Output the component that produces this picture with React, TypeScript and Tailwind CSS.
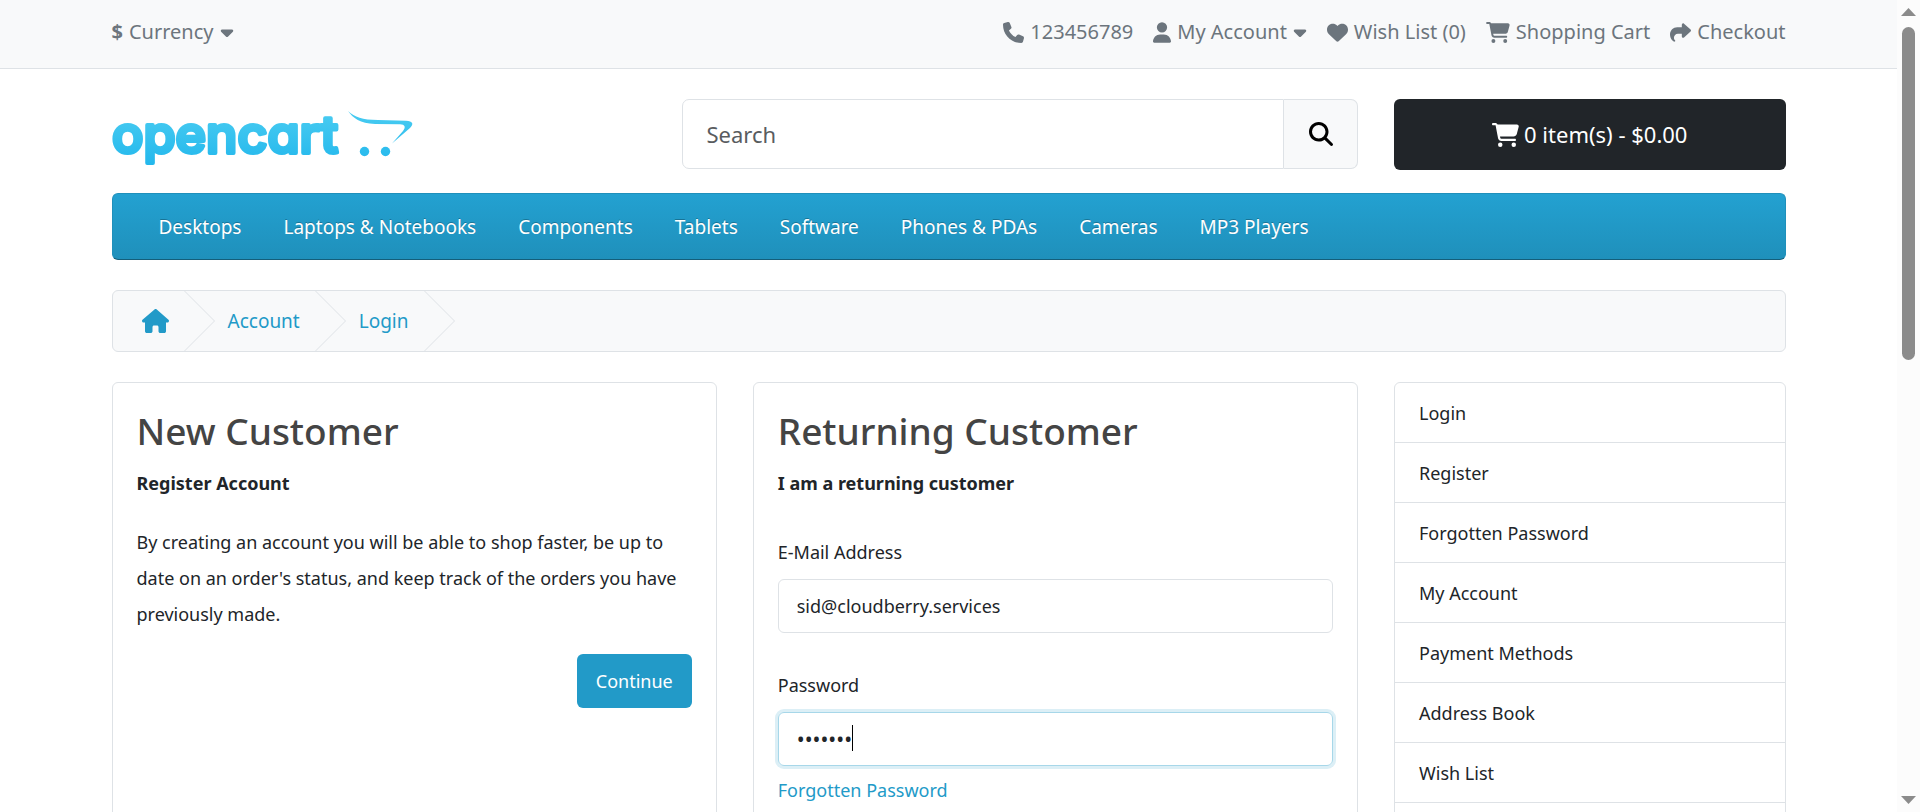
import type { ReactNode } from "react";
import {
  FaCaretDown,
  FaCartShopping,
  FaHeart,
  FaHouse,
  FaMagnifyingGlass,
  FaPhone,
  FaShare,
  FaUser,
} from "react-icons/fa6";

const categories = [
  "Desktops",
  "Laptops & Notebooks",
  "Components",
  "Tablets",
  "Software",
  "Phones & PDAs",
  "Cameras",
  "MP3 Players",
];

const accountLinks = [
  "Login",
  "Register",
  "Forgotten Password",
  "My Account",
  "Payment Methods",
  "Address Book",
  "Wish List",
];

function Container({ children }: { children: ReactNode }) {
  return <div className="mx-auto w-full max-w-[1710px] px-[18px]">{children}</div>;
}

function Logo() {
  return (
    <svg viewBox="0 0 302 58" className="h-[58px] w-[302px] overflow-visible" role="img" aria-label="opencart">
      <defs>
        <linearGradient id="brand" gradientUnits="userSpaceOnUse" x1="0" y1="2" x2="0" y2="58">
          <stop offset="0" stopColor="#48cbf1" />
          <stop offset="1" stopColor="#20b6ec" />
        </linearGradient>
      </defs>
      <text
        x="0"
        y="42"
        fill="url(#brand)"
        stroke="url(#brand)"
        strokeWidth="4"
        strokeLinejoin="round"
        className="font-['Inter',sans-serif] text-[52px] font-medium [font-feature-settings:'cv11']"
      >
        opencart
      </text>
      <path
        fill="url(#brand)"
        d="M236 0C241 7 248 12.500 263 13L288 13.300C293 13.600 294 16 291 20L280 32.500L298 17C302 13 301 10 294 9.700L266 9C250 8.700 243 6.500 236 0Z"
      />
      <circle cx="252.500" cy="40.500" r="4.700" fill="url(#brand)" />
      <circle cx="273.500" cy="40.500" r="4.700" fill="url(#brand)" />
    </svg>
  );
}

function TopBar() {
  const item = "flex items-center gap-[6px]";
  return (
    <nav className="border-b border-[#dee2e6] bg-[#f8f9fa] pt-[17px] pb-[21px] text-[20px] leading-[30px] text-[#6c757d]">
      <Container>
        <div className="flex justify-between">
          <button type="button" className={item}>
            <strong>$</strong> Currency <FaCaretDown className="h-5 w-[14px]" />
          </button>
          <ul className="flex gap-5">
            <li>
              <a href="#phone" className={item}>
                <FaPhone className="size-[21px]" /> 123456789
              </a>
            </li>
            <li>
              <button type="button" className={item}>
                <FaUser className="h-[21px] w-[18px]" /> My Account <FaCaretDown className="h-5 w-[14px]" />
              </button>
            </li>
            <li>
              <a href="#wishlist" className={item}>
                <FaHeart className="size-[21px]" /> Wish List (0)
              </a>
            </li>
            <li>
              <a href="#cart" className={item}>
                <FaCartShopping className="h-[21px] w-6" /> Shopping Cart
              </a>
            </li>
            <li>
              <a href="#checkout" className={item}>
                <FaShare className="size-[21px]" /> Checkout
              </a>
            </li>
          </ul>
        </div>
      </Container>
    </nav>
  );
}

function Header() {
  return (
    <header className="grid grid-cols-12 gap-x-9 pt-[30px]">
      <a href="#home" className="col-span-4 pt-3">
        <Logo />
      </a>
      <form className="col-span-5 flex h-[70px]">
        <input
          type="text"
          aria-label="Search"
          placeholder="Search"
          className="min-w-0 flex-1 rounded-l-[7px] border border-[#dee2e6] px-6 text-[22px] placeholder:text-[#595c5f]"
        />
        <button
          type="button"
          aria-label="Search"
          className="flex w-[74px] items-center justify-center rounded-r-[7px] border border-l-0 border-[#dee2e6] bg-[#f8f9fa] text-black"
        >
          <FaMagnifyingGlass className="size-6" />
        </button>
      </form>
      <button
        type="button"
        className="col-span-3 flex h-[71px] items-center justify-center gap-[5px] rounded-[6px] bg-[#212529] text-[22px] text-white"
      >
        <FaCartShopping className="h-6 w-[27px]" /> 0 item(s) - $0.00
      </button>
    </header>
  );
}

function Menu() {
  return (
    <nav className="mt-[23px] flex h-[67px] items-center rounded-[6px] border border-[#1f90bb] border-b-[#145e7a] bg-linear-to-b from-[#23a1d1] to-[#1f90bb] px-[25px] pt-[2px]">
      <ul className="flex text-[19px]">
        {categories.map((name) => (
          <li key={name}>
            <a href="#category" className="px-[21px] text-white text-shadow-[0_-1px_0_rgba(0,0,0,0.25)]">
              {name}
            </a>
          </li>
        ))}
      </ul>
    </nav>
  );
}

function Chevron() {
  return (
    <svg viewBox="0 0 31 60" className="h-[60px] w-[31px] shrink-0" fill="none" stroke="#dee2e6" aria-hidden="true">
      <path d="M0.500 0L30.500 30L0.500 60" />
    </svg>
  );
}

function Breadcrumb() {
  return (
    <ol className="my-[30px] flex h-[62px] items-center rounded-[6px] border border-[#dee2e6] bg-[#f8f9fa] pl-[29px] text-[19px] text-[#229ac8]">
      <li className="flex items-center gap-[15px]">
        <a href="#home" aria-label="Home">
          <FaHouse className="h-6 w-[27px]" />
        </a>
        <Chevron />
      </li>
      <li className="flex items-center gap-[15px] pl-[13px]">
        <a href="#account">Account</a>
        <Chevron />
      </li>
      <li className="flex items-center gap-[15px] pl-[13px]">
        <a href="#login">Login</a>
        <Chevron />
      </li>
    </ol>
  );
}

function Card({ title, subtitle, children }: { title: string; subtitle: string; children: ReactNode }) {
  return (
    <section className="rounded-[6px] border border-[#dee2e6] px-6 pt-6 pb-20">
      <h2 className="mb-[15px] text-[37px] leading-[47px] font-medium text-[#444444]">{title}</h2>
      <strong className="block font-bold">{subtitle}</strong>
      {children}
    </section>
  );
}

const field = "h-[54px] w-full rounded-[6px] border px-[18px] text-[#212529]";

function ScrollTrack() {
  return (
    <aside className="flex w-[23px] shrink-0 flex-col items-center bg-[#fcfcfc] py-2" aria-hidden="true">
      <svg viewBox="0 0 15 8" className="h-2 w-[15px]" fill="#8b8b8b">
        <path d="M0 8L7.500 0L15 8Z" />
      </svg>
      <div className="mt-[11px] h-[333px] w-[13px] rounded-full bg-[#8b8b8b]" />
      <svg viewBox="0 0 15 8" className="mt-auto h-2 w-[15px]" fill="#8b8b8b">
        <path d="M0 0L7.500 8L15 0Z" />
      </svg>
    </aside>
  );
}

export default function App() {
  return (
    <div className="flex h-screen overflow-hidden bg-white font-['Noto_Sans','Open_Sans',sans-serif] text-[18px] leading-[29px] text-[#212529]">
      <div className="min-w-0 flex-1 overflow-hidden">
        <TopBar />
        <Container>
          <Header />
          <Menu />
          <Breadcrumb />
          <div className="grid grid-cols-12 gap-x-9">
            <main className="col-span-9 grid grid-cols-2 gap-x-9">
              <Card title="New Customer" subtitle="Register Account">
                <p className="mt-[26px] mb-[22px] leading-[36px]">
                  By creating an account you will be able to shop faster, be up to date on an order's status, and keep
                  track of the orders you have previously made.
                </p>
                <div className="flex justify-end">
                  <a
                    href="#register"
                    className="flex h-[54px] items-center rounded-[6px] bg-[#229ac8] px-[19px] text-white"
                  >
                    Continue
                  </a>
                </div>
              </Card>
              <Card title="Returning Customer" subtitle="I am a returning customer">
                <form>
                  <label htmlFor="email" className="mt-10 mb-3 block">
                    E-Mail Address
                  </label>
                  <input
                    id="email"
                    type="email"
                    defaultValue="sid@cloudberry.services"
                    className={`${field} border-[#dee2e6]`}
                  />
                  <label htmlFor="password" className="mt-[38px] mb-3 block">
                    Password
                  </label>
                  <div className="relative">
                    <input
                      id="password"
                      type="password"
                      defaultValue="sevench"
                      className={`${field} border-[#a7d7e9] text-[21px] ring-[3px] ring-[#dceff6] outline-none`}
                    />
                    <span className="absolute top-[13px] left-[74px] h-[26px] w-px bg-black" />
                  </div>
                  <a href="#forgotten" className="mt-[10px] block text-[#229ac8]">
                    Forgotten Password
                  </a>
                </form>
              </Card>
            </main>
            <ul className="col-span-3 rounded-t-[6px] border border-[#dee2e6]">
              {accountLinks.map((name) => (
                <li key={name} className="border-b border-[#dee2e6]">
                  <a href="#account" className="block px-6 pt-4 pb-[14px]">
                    {name}
                  </a>
                </li>
              ))}
            </ul>
          </div>
        </Container>
      </div>
      <ScrollTrack />
    </div>
  );
}
